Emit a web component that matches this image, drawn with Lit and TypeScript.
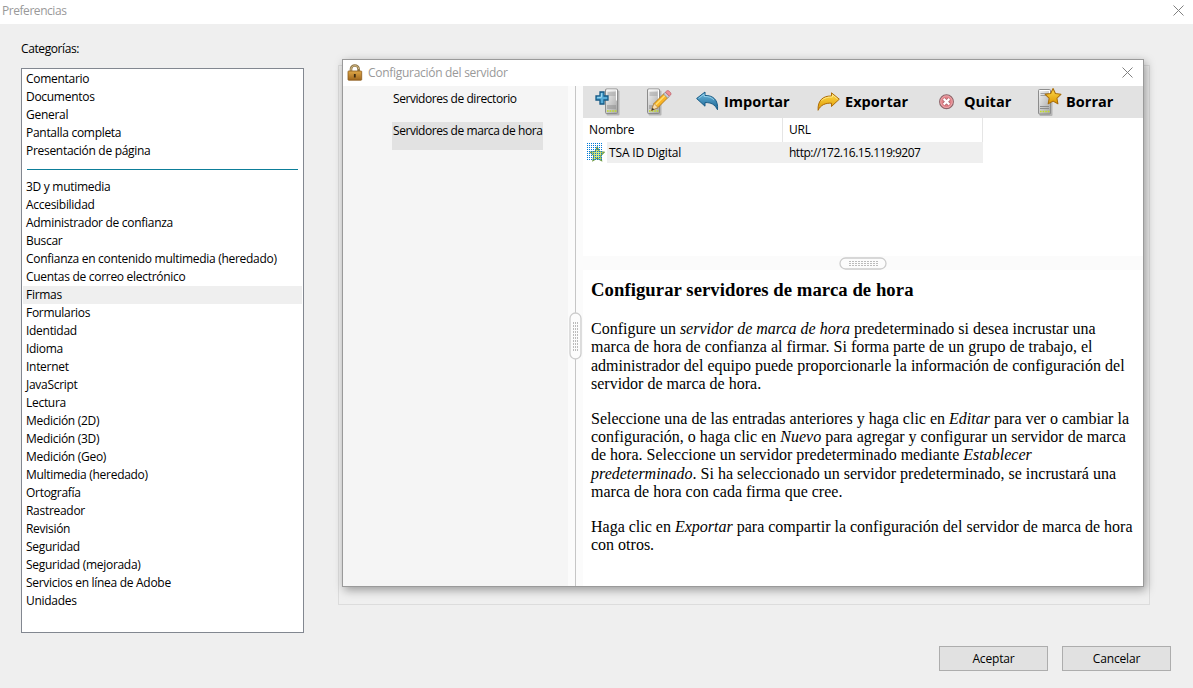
import { LitElement, html, css, svg } from "lit";
import { customElement, property } from "lit/decorators.js";
import { classMap } from "lit/directives/class-map.js";

const GENERAL = ["Comentario", "Documentos", "General", "Pantalla completa", "Presentación de página"];
const CATEGORIES = [
  "3D y mutimedia", "Accesibilidad", "Administrador de confianza", "Buscar",
  "Confianza en contenido multimedia (heredado)", "Cuentas de correo electrónico", "Firmas",
  "Formularios", "Identidad", "Idioma", "Internet", "JavaScript", "Lectura", "Medición (2D)",
  "Medición (3D)", "Medición (Geo)", "Multimedia (heredado)", "Ortografía", "Rastreador",
  "Revisión", "Seguridad", "Seguridad (mejorada)", "Servicios en línea de Adobe", "Unidades",
];

const STAR = "M9 0.8 L11.5 6.1 L17.3 6.9 L13.1 11 L14.1 16.8 L9 14 L3.9 16.8 L4.9 11 L0.7 6.9 L6.5 6.1 Z";

const server = svg`
  <rect x="1.5" y="2" width="13" height="25" rx="1" fill="#0003"/>
  <rect x="0.5" y="0.5" width="12" height="24.5" rx="1" fill="url(#srv)" stroke="#8c8c8c"/>
  <path d="M2 1.5 H11.5 V12" fill="none" stroke="#fff"/>
  <path d="M2.5 4.5 H10.5 M2.5 6.5 H10.5" stroke="#a0a0a0"/>
  <path d="M2 17.5 H11 M2 19.5 H11" stroke="#8c8c8c"/>
  <path d="M2 22.5 H11.5" stroke="#c3e022" stroke-width="1.6" stroke-dasharray="1.6 1"/>`;
const serverFill = svg`<linearGradient id="srv" x1="0" y1="0" x2="1" y2="1">
  <stop offset="0" stop-color="#f4f4f4"/><stop offset="1" stop-color="#a4a4a4"/></linearGradient>`;
const goldFill = svg`<linearGradient id="gold" x1="0" y1="0" x2="0" y2="1">
  <stop offset="0" stop-color="#ffdc4c"/><stop offset="1" stop-color="#dc9600"/></linearGradient>`;

const closeIcon = html`<svg width="11" height="11" viewBox="0 0 11 11"><path d="M0.5 0.5 L10.5 10.5 M10.5 0.5 L0.5 10.5" stroke="#808080" fill="none"/></svg>`;

const icons = {
  add: html`<svg width="26" height="30" viewBox="0 0 26 30"><defs>${serverFill}</defs>
    <g transform="translate(10 1.5)">${server}</g>
    <path d="M5 5 H9 V9 H13 V13 H9 V17 H5 V13 H1 V9 H5 Z" fill="#59add8" stroke="#155a86" stroke-width="1.3"/>
    <path d="M6.4 6.2 V10.3 H2.2" fill="none" stroke="#a6dcf3"/></svg>`,
  edit: html`<svg width="28" height="30" viewBox="0 0 28 30"><defs>${serverFill}</defs>
    <g transform="translate(2 1.5)">${server}</g>
    <path d="M6.5 23.5 L9 16.5 L19 6.5 L23 10.5 L13 20.5 Z" fill="#f8b325" stroke="#a76c10" stroke-width="0.8"/>
    <path d="M10.5 18 L20 8.5" stroke="#ffdd70" stroke-width="1.6"/>
    <path d="M6.5 23.5 L9 16.5 L13 20.5 Z" fill="#f8dcae" stroke="#a5793d" stroke-width="0.6"/>
    <path d="M6.5 23.5 L7.5 20.8 L9.3 22.5 Z" fill="#333"/>
    <path d="M18.5 7 L20.4 5.2 L24.4 9.2 L22.5 11 Z" fill="#c9ccd6" stroke="#777d90" stroke-width="0.6"/>
    <path d="M20.4 5.2 L21.7 4 Q23 3 24.2 4.2 L25.6 5.7 Q26.5 6.9 25.6 8 L24.4 9.2 Z" fill="#ee9096" stroke="#b75b65" stroke-width="0.7"/></svg>`,
  import: html`<svg width="24" height="22" viewBox="0 0 24 22"><defs><linearGradient id="blue" x1="0" y1="0" x2="0" y2="1">
      <stop offset="0" stop-color="#6ebbe0"/><stop offset="1" stop-color="#17608f"/></linearGradient></defs>
    <path d="M0.6 7.5 L9 1 V4.5 C17 4.2 22.5 9 21.5 18.8 C19 13.5 15 11.3 9 11.6 V15.2 Z" fill="url(#blue)" stroke="#185b86" stroke-linejoin="round"/>
    <path d="M2.5 7.4 L8.1 3.2 V5.5 Q14.5 5.2 18 9" fill="none" stroke="#a1d7ee" stroke-width="0.8"/></svg>`,
  export: html`<svg width="24" height="22" viewBox="0 0 24 22"><defs>${goldFill}</defs>
    <path d="M22.3 8.2 L14.5 1.8 V5 C6 4.7 0.5 9.5 1.1 19.3 C3.7 13.8 8.5 11.9 14.5 12.2 V15.5 Z" fill="url(#gold)" stroke="#ad6c08" stroke-linejoin="round"/>
    <path d="M20.6 8.1 L15.4 3.8 V6 Q8.5 5.7 4.5 9.5" fill="none" stroke="#ffec98" stroke-width="0.8"/></svg>`,
  remove: html`<svg width="16" height="16" viewBox="0 0 16 16">
    <circle cx="7.5" cy="7.7" r="6.9" fill="#e28188" stroke="#8d666b" stroke-width="1.1"/><circle cx="7.5" cy="7.7" r="5.8" fill="none" stroke="#eeb1b5" stroke-width="0.8"/>
    <path d="M4.8 5 L10.2 10.4 M10.2 5 L4.8 10.4" stroke="#a9636b" stroke-width="3.8"/><path d="M4.7 4.9 L10.3 10.5 M10.3 4.9 L4.7 10.5" stroke="#fff" stroke-width="2.3"/></svg>`,
  clear: html`<svg width="27" height="30" viewBox="0 0 27 30"><defs>${serverFill}${goldFill}</defs>
    <g transform="translate(1 2)">${server}</g>
    <path transform="translate(7.5 .8) scale(.95)" d=${STAR} fill="url(#gold)" stroke="#a86c08" stroke-width="1.1" stroke-linejoin="round"/></svg>`,
  entry: html`<svg width="18" height="19" viewBox="0 0 18 19"><defs><pattern id="dots" width="2" height="2" patternUnits="userSpaceOnUse"><rect width="1" height="1" fill="#0078d7"/></pattern></defs>
    <path transform="translate(2.5 3.2) scale(.86)" d=${STAR} fill="#d4e681" stroke="#6d9a45" stroke-width="1.3"/>
    <rect width="16" height="17" fill="url(#dots)"/></svg>`,
  lock: html`<svg width="16" height="17" viewBox="0 0 16 17"><defs><linearGradient id="lk" x1="0" y1="0" x2="0" y2="1">
      <stop offset="0" stop-color="#e0a847"/><stop offset="1" stop-color="#9f661d"/></linearGradient></defs>
    <path d="M4 8.5 V5 C4 .4 11.6 .4 11.6 5 V8.5" fill="none" stroke="#8e7445" stroke-width="2.6"/>
    <path d="M4 8 V5 C4 .6 11.6 .6 11.6 5" fill="none" stroke="#d7c08c" stroke-width="1"/>
    <rect x="1" y="7" width="13.7" height="9.2" rx=".7" fill="url(#lk)" stroke="#8c5b1c" stroke-width=".8"/>
    <path d="M7.8 10 V13.5" stroke="#3d2b11" stroke-width="1.8"/></svg>`,
};

@customElement("category-list")
class CategoryList extends LitElement {
  @property() selected = "Firmas";
  static styles = css`
    :host { display: block; box-sizing: border-box; width: 283px; height: 565px; border: 1px solid #828790; background: #fff; padding: 1px; }
    .row { height: 18px; line-height: 18px; padding-left: 3px; white-space: nowrap; }
    .row.selected { background: #efefef; }
    .divider { height: 18px; display: flex; align-items: center; padding: 0 4px; }
    .divider::before { content: ""; flex: 1; height: 1px; background: #0d7e99; margin-top: 1px; }
  `;
  private row(name: string) {
    return html`<div class=${classMap({ row: true, selected: name === this.selected })}>${name}</div>`;
  }
  render() {
    return html`${GENERAL.map((n) => this.row(n))}<div class="divider"></div>${CATEGORIES.map((n) => this.row(n))}`;
  }
}

@customElement("server-dialog")
class ServerDialog extends LitElement {
  static styles = css`
    :host { display: flex; flex-direction: column; box-sizing: border-box; width: 802px; height: 528px; border: 1px solid #9a9a9a; background: #fff; box-shadow: 2px 3px 9px rgba(0,0,0,.36); }
    svg { display: block; flex: none; }
    .title { height: 26px; display: flex; align-items: center; padding: 0 10px 2px 4px; color: #999; box-sizing: border-box; }
    .title .name { flex: 1; margin-left: 5px; padding-top: 1px; letter-spacing: -.29px; }
    .body { flex: 1; display: flex; min-height: 0; }
    .nav { width: 225px; background: #f5f5f5; display: flex; flex-direction: column; align-items: flex-start; padding: 3px 0 0 49px; box-sizing: border-box; gap: 13px; letter-spacing: -.43px; }
    .nav div { height: 20px; line-height: 20px; padding-left: 1px; white-space: nowrap; }
    .nav .on { background: #e2e2e2; height: 28px; width: 150px; line-height: 18px; }
    .vsplit { width: 15px; background: linear-gradient(90deg, #fbfbfb 7px, #c6c6c6 7px 8px, #fbfbfb 8px); display: flex; align-items: center; justify-content: center; }
    .main { flex: 1; display: flex; flex-direction: column; min-width: 0; }
    .bar { height: 32px; background: #e2e2e2; display: flex; align-items: center; font: bold 14.5px "Open Sans", "Noto Sans", sans-serif; letter-spacing: .03px; box-sizing: border-box; padding-left: 12px; }
    .tool { display: flex; align-items: center; white-space: nowrap; }
    .tool span { padding-bottom: 2px; }
    .t-add { width: 50px; } .t-edit { width: 51px; } .t-import { width: 121px; gap: 4px; } .t-export { width: 122px; gap: 4px; } .t-remove { width: 98px; gap: 9px; } .t-clear { gap: 2px; }
    .table { height: 138px; box-sizing: border-box; }
    .head { display: grid; grid-template-columns: 200px 200px; height: 24px; line-height: 24px; }
    .head div { border-right: 1px solid #e5e5e5; padding-left: 6px; }
    .item { display: grid; grid-template-columns: 24px 176px 200px; height: 21px; line-height: 21px; width: 400px; }
    .item .ico { padding: 1px 0 0 4px; }
    .item .cell { background: #efefef; padding-left: 2px; }
    .item .url { padding-left: 6px; letter-spacing: -.5px; }
    .hsplit { height: 14px; background: #fbfbfb; display: flex; justify-content: center; align-items: center; }
    .info { flex: 1; padding: 8px 0 0 8px; font: 16px/18.4px "Liberation Serif", serif; letter-spacing: 0; white-space: nowrap; }
    .info h1 { margin: 0; font-size: 18.7px; line-height: 24px; font-weight: bold; letter-spacing: .06px; }
    .info p { margin: 0 0 16px; } .info h1 + p { margin-top: 18px; }
  `;
  private tool(kind: keyof typeof icons, label = "") {
    return html`<div class="tool t-${kind}">${icons[kind]}<span>${label}</span></div>`;
  }
  render() {
    return html`
      <div class="title">${icons.lock}<span class="name">Configuración del servidor</span>${closeIcon}</div>
      <div class="body">
        <div class="nav"><div>Servidores de directorio</div><div class="on">Servidores de marca de hora</div></div>
        <div class="vsplit"><svg width="13" height="48" viewBox="0 0 13 48"><rect x="1" y="1" width="11" height="46" rx="5.5" fill="#fcfcfc" stroke="#ccc" stroke-width="1.3"/><path d="M4.5 10 V39 M6.5 10 V39 M8.5 10 V39" stroke="#bbb" stroke-dasharray="2 1"/></svg></div>
        <div class="main">
          <div class="bar">${this.tool("add")}${this.tool("edit")}${this.tool("import", "Importar")}${this.tool("export", "Exportar")}${this.tool("remove", "Quitar")}${this.tool("clear", "Borrar")}</div>
          <div class="table">
            <div class="head"><div>Nombre</div><div>URL</div></div>
            <div class="item"><div class="ico">${icons.entry}</div><div class="cell">TSA ID Digital</div><div class="cell url">http://172.16.15.119:9207</div></div>
          </div>
          <div class="hsplit"><svg width="48" height="14" viewBox="0 0 48 14"><rect x="1" y="2" width="46" height="11" rx="5.5" fill="#fcfcfc" stroke="#ccc" stroke-width="1.3"/><path d="M10 5.5 H39 M10 7.5 H39 M10 9.5 H39" stroke="#bbb" stroke-dasharray="2 1"/></svg></div>
          <div class="info">
            <h1>Configurar servidores de marca de hora</h1>
            <p>Configure un <i>servidor de marca de hora</i> predeterminado si desea incrustar una<br>marca de hora de confianza al firmar. Si forma parte de un grupo de trabajo, el<br>administrador del equipo puede proporcionarle la información de configuración del<br>servidor de marca de hora.</p>
            <p>Seleccione una de las entradas anteriores y haga clic en <i>Editar</i> para ver o cambiar la<br>configuración, o haga clic en <i>Nuevo</i> para agregar y configurar un servidor de marca<br>de hora. Seleccione un servidor predeterminado mediante <i>Establecer<br>predeterminado</i>. Si ha seleccionado un servidor predeterminado, se incrustará una<br>marca de hora con cada firma que cree.</p>
            <p>Haga clic en <i>Exportar</i> para compartir la configuración del servidor de marca de hora<br>con otros.</p>
          </div>
        </div>
      </div>`;
  }
}

@customElement("app-root")
class AppRoot extends LitElement {
  static styles = css`
    :host { display: flex; flex-direction: column; position: relative; width: 1193px; height: 688px; overflow: hidden; background: #efefef; color: #000; font: 12px "Open Sans", "Noto Sans", sans-serif; letter-spacing: -.15px; }
    .title { height: 24px; box-sizing: border-box; background: #fff; color: #999; display: flex; justify-content: space-between; align-items: center; padding: 0 9px 3px 2px; letter-spacing: -.45px; }
    .content { display: flex; gap: 34px; padding: 16px 0 0 21px; }
    .label { height: 18px; line-height: 18px; margin-bottom: 10px; letter-spacing: -.4px; }
    category-list { letter-spacing: -.29px; }
    .group { width: 812px; height: 540px; margin-top: 25px; border: 1px solid #dcdcdc; box-sizing: border-box; }
    .actions { display: flex; justify-content: flex-end; gap: 14px; padding: 13px 22px 0 0; }
    .button { width: 109px; height: 25px; box-sizing: border-box; border: 1px solid #adadad; background: #e1e1e1; text-align: center; line-height: 24px; }
    server-dialog { position: absolute; left: 342px; top: 59px; }
  `;
  render() {
    return html`
      <div class="title"><span>Preferencias</span>${closeIcon}</div>
      <div class="content">
        <div><div class="label">Categorías:</div><category-list></category-list></div>
        <div class="group"></div>
      </div>
      <div class="actions"><div class="button">Aceptar</div><div class="button">Cancelar</div></div>
      <server-dialog></server-dialog>`;
  }
}
